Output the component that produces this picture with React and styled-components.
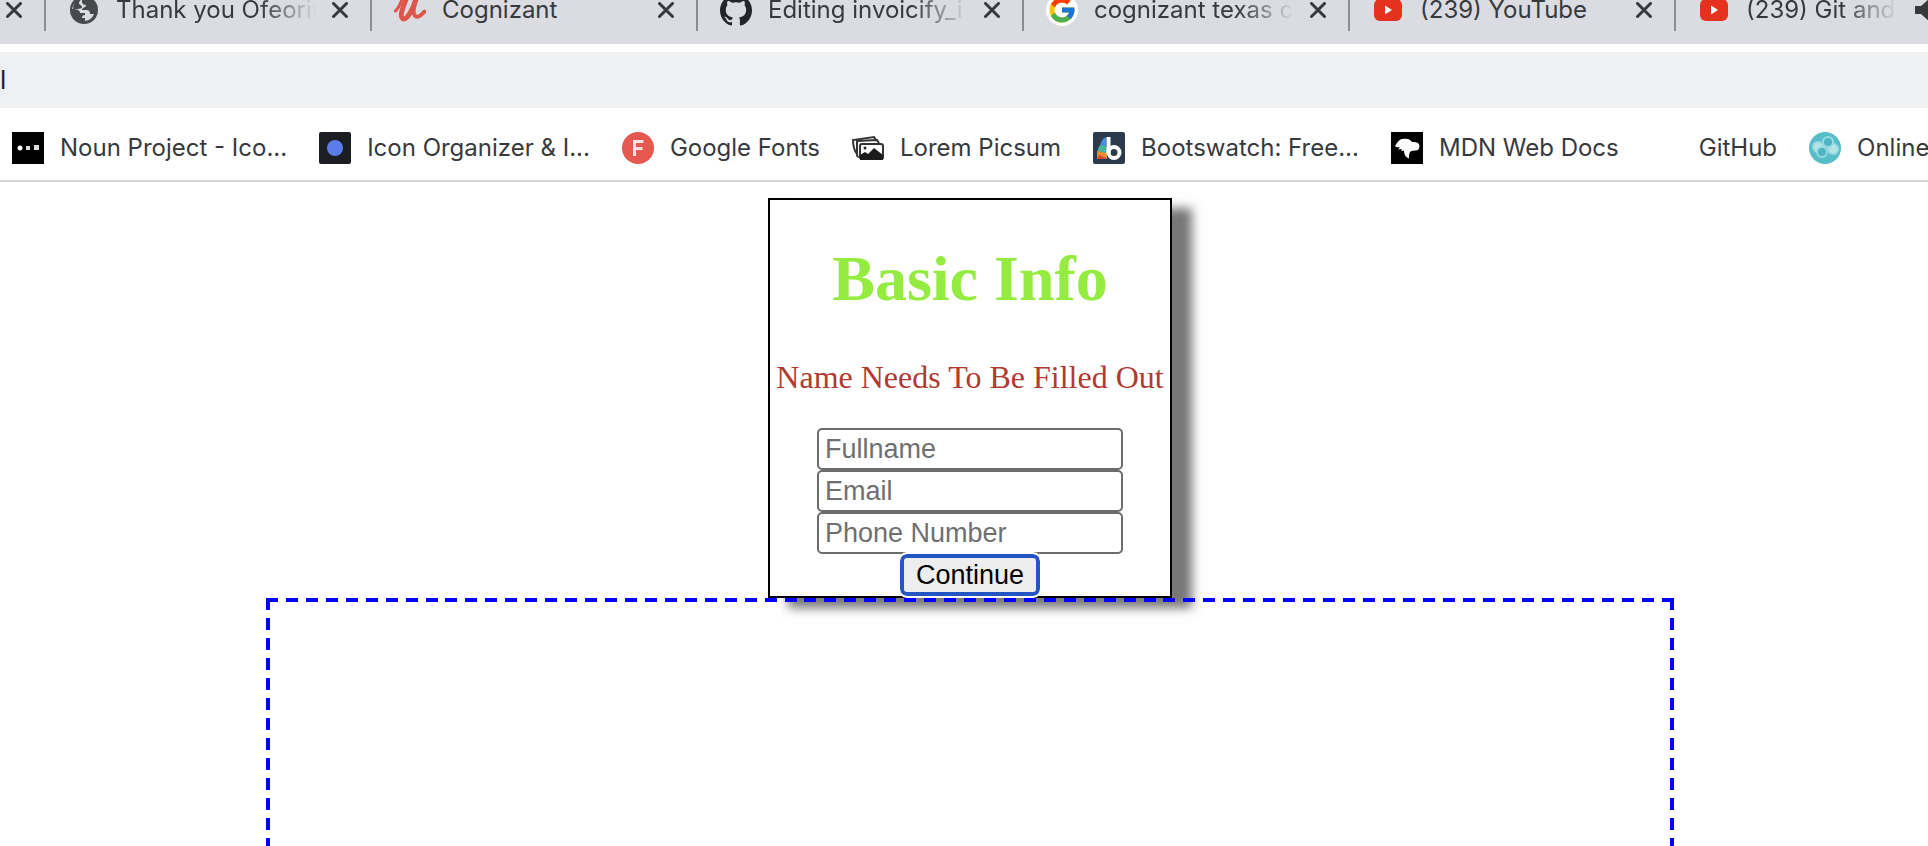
import React from 'react';
import styled, { createGlobalStyle } from 'styled-components';
import { SiGithub } from 'react-icons/si';
import { FcGoogle } from 'react-icons/fc';

const Global = createGlobalStyle`
  * { box-sizing: border-box; }
  html, body, #root { height: 100%; }
  body { margin: 0; background: #fff; overflow: hidden; }
`;

const Page = styled.div`
  min-height: 100%;
  display: flex;
  flex-direction: column;
`;

const TabStrip = styled.nav`
  display: flex;
  height: 44px;
  overflow: hidden;
  background: #dbdce1;
  font: 24px/32px Inter, sans-serif;
  color: #37393d;
`;

const Tab = styled.div`
  flex: 0 0 ${(p) => (p.$first ? '46px' : '326px')};
  min-width: 0;
  display: flex;
  align-items: center;
  gap: 16px;
  height: 31px;
  padding: 0 22px 11px ${(p) => (p.$first ? '6px' : '22px')};
  border-right: 2px solid #8c8d91;
`;

const TabLink = styled.a`
  flex: 1;
  min-width: 0;
  display: flex;
  align-items: center;
  gap: 16px;
  color: inherit;
  text-decoration: none;
  svg { flex: none; }
`;

const TabTitle = styled.span`
  flex: 1;
  min-width: 0;
  overflow: hidden;
  white-space: nowrap;
  mask-image: ${(p) => (p.$fade ? 'linear-gradient(to right, #000 calc(100% - 56px), transparent)' : 'none')};
`;

const IconButton = styled.button`
  display: flex;
  flex: none;
  padding: 0;
  border: 0;
  background: none;
  color: inherit;
`;

const AddressBar = styled.input`
  display: block;
  width: 100%;
  height: 56px;
  margin-top: 8px;
  padding: 0;
  border: 0;
  outline: 0;
  background: #eff0f2;
  color: #222;
  font: 26px/56px Inter, sans-serif;
`;

const BookmarkBar = styled.nav`
  display: flex;
  align-items: center;
  height: 74px;
  padding: 8px 0 0 12px;
  overflow: hidden;
  gap: 32px;
  border-bottom: 2px solid #d7d7dc;
  font: 24px/32px Inter, sans-serif;
  color: #37393d;
`;

const Bookmark = styled.a`
  display: flex;
  align-items: center;
  gap: 16px;
  flex: none;
  color: inherit;
  text-decoration: none;
  white-space: nowrap;
`;

const Content = styled.main`
  flex: 1;
  display: flex;
  flex-direction: column;
  align-items: center;
  padding: 16px 0 0 12px;
`;

const Card = styled.form`
  display: flex;
  flex-direction: column;
  align-items: center;
  padding: 0 6px;
  border: 2px solid #000;
  box-shadow: 20px 10px 10px #777;
  font-family: "Liberation Serif", serif;
`;

const Title = styled.h1`
  margin: 42px 0 43px;
  font-size: 64px;
  line-height: 74px;
  color: #94ec40;
`;

const Message = styled.p`
  margin: 0 0 33px;
  font-size: 32px;
  line-height: 36px;
  color: #b13a30;
`;

const Field = styled.input`
  width: 306px;
  height: 42px;
  padding: 2px 6px;
  border: 2px solid #6c6c6c;
  border-radius: 5px;
  background: #fff;
  font: 27px/32px "Liberation Sans", sans-serif;
  &::placeholder { color: #6f6f6f; opacity: 1; }
`;

const Continue = styled.button`
  height: 42px;
  padding: 0 12px;
  border: 4px solid #2355c4;
  border-radius: 7px;
  outline: 2px solid #fff;
  background: #ededed;
  color: #000;
  font: 27px/32px "Liberation Sans", sans-serif;
`;

/* Dashes are 12px long on a 20px period, longer than the browser's own dashed border. */
const Canvas = styled.section`
  --side: repeating-linear-gradient(to bottom, #00f 0 12px, transparent 12px 20px);
  flex: 1;
  align-self: stretch;
  margin: 0 254px;
  background:
    repeating-linear-gradient(to right, #00f 0 12px, transparent 12px calc((100% + 8px) / 71)) top / 100% 4px no-repeat,
    var(--side) left / 4px 100% no-repeat,
    var(--side) right / 4px 100% no-repeat;
`;

const Close = () => (
  <svg width="16" height="16" viewBox="0 0 16 16" stroke="currentColor" strokeWidth="3" strokeLinecap="round">
    <path d="M1.5 1.5 14.5 14.5M14.5 1.5 1.5 14.5" />
  </svg>
);

const Globe = () => (
  <svg width="32" height="32" viewBox="0 0 32 32">
    <circle cx="16" cy="16" r="14" fill="#48494d" />
    <path d="M14 5v3c0 2 2 3 4 3 0 3-4 2-4 5h5c2 0 3 2 3 4h4a11 11 0 0 1-9 7v-3h-3c0-2 1-3 3-3v-2h-5c0-3-3-4-8-4A11 11 0 0 1 14 5" fill="#dbdce1" />
    <path d="M15 4c-2 2-4 3-4 5s3 2 3 4-4 2-9 2C5 8 9 4 15 4" fill="#48494d" />
  </svg>
);

const Udemy = () => (
  <svg width="32" height="32" viewBox="0 0 32 32" fill="none" stroke="#de5549" strokeLinecap="round" strokeLinejoin="round">
    <path d="M1.500 17C5 14 7 8 9 3" strokeWidth="3" />
    <path d="M13 3C10 11 5 22 8.500 24.500 13 27 19 15 22 5" strokeWidth="5" />
    <path d="M23 3C20 12 18 21 22 22.500c3 1 6-2 8.500-5" strokeWidth="4" />
  </svg>
);

const GoogleBadge = () => (
  <svg width="32" height="32" viewBox="0 0 32 32">
    <circle cx="16" cy="16" r="16" fill="#fff" />
    <FcGoogle x="1" y="1" size={30} />
  </svg>
);

const YouTube = () => (
  <svg width="32" height="32" viewBox="0 0 32 32">
    <rect x="2" y="5" width="28" height="22" rx="6" fill="#e5321f" />
    <path d="m13 11.500 7 4.500-7 4.500z" fill="#fff" />
  </svg>
);

const Speaker = () => (
  <svg width="32" height="32" viewBox="0 0 32 32" fill="#37393d">
    <path d="M1 12h6l8-7v22l-8-7H1z" />
    <path d="M18 10q6 6 0 12" fill="none" stroke="#37393d" strokeWidth="3" />
  </svg>
);

const Noun = () => (
  <svg width="32" height="32" viewBox="0 0 32 32">
    <path d="M0 0h32v32H0z" />
    <circle cx="8" cy="16" r="2.500" fill="#fff" />
    <path d="M14 14h4v4h-4zM22 13h5v5h-5z" fill="#ddd" />
  </svg>
);

const Organizer = () => (
  <svg width="32" height="32" viewBox="0 0 32 32">
    <rect width="32" height="32" rx="2" fill="#1d1e22" />
    <circle cx="16" cy="16" r="8" fill="#5c7de8" />
  </svg>
);

const FontsIcon = () => (
  <svg width="32" height="32" viewBox="0 0 32 32">
    <circle cx="16" cy="16" r="16" fill="#e5574f" />
    <path d="M12.500 24V9.500H21.500M12.500 16.500H20.500" fill="none" stroke="#f8e4e3" strokeWidth="3" />
  </svg>
);

const Picsum = () => (
  <svg width="32" height="32" viewBox="0 0 32 32" fill="none" stroke="#333" strokeWidth="2">
    <path d="M5 22C2 18 1 13 1 8l21-3 2 3" />
    <path d="M8 25c-3 0-3-1-3-3V9l20-1 2 3" />
    <rect x="8" y="12" width="23" height="15" rx="2" fill="#fff" />
    <path d="M8 28v-5l5-3 3 2 6-6 9 7v5z" fill="#1c1c1c" stroke="none" />
    <circle cx="13" cy="16" r="1.500" fill="#222" stroke="none" />
  </svg>
);

const Bootswatch = () => (
  <svg width="32" height="32" viewBox="0 0 32 32">
    <rect width="32" height="32" rx="2" fill="#2b3a4c" />
    <path d="M13 5v10l-6 1c0-5 2-9 6-11" fill="#4a90d9" />
    <path d="m7 13 7 2v7H5c-1-3 0-6 2-9" fill="#49b39c" />
    <path d="m4 19 10 2v6H4z" fill="#e98c2c" />
    <path d="m6 23 9 4H4z" fill="#d64b35" />
    <path d="M15.500 5v17" stroke="#fff" strokeWidth="4" />
    <circle cx="21" cy="20.500" r="5.500" fill="none" stroke="#fff" strokeWidth="4" />
  </svg>
);

const Mdn = () => (
  <svg width="32" height="32" viewBox="0 0 32 32">
    <path d="M0 0h32v32H0z" />
    <path d="M4 14 6 11C8 7 12 6 16 7c3 0 4 2 5 3 3 0 5 0 7 2 1 2 0 5-1 6-3 1-6 0-8 2-1 2-1 4-1 6.500-3-1-5-4-5-8l-3 .5 1-2-4 .5 2-2-4-.5z" fill="#fff" />
  </svg>
);

const Online = () => (
  <svg width="32" height="32" viewBox="0 0 32 32">
    <circle cx="16" cy="16" r="16" fill="#56bdc9" />
    <g fill="#4eb5c3" stroke="#9adbe1" strokeWidth="2">
      <circle cx="9" cy="15" r="5" fill="#b5e4e8" />
      <circle cx="24" cy="17" r="5" fill="#b5e4e8" />
      <circle cx="19" cy="10" r="5" />
      <circle cx="13" cy="20" r="5" />
    </g>
  </svg>
);

const Blank = styled.span`
  width: 32px;
  height: 32px;
`;

const tabs = [
  { title: 'Thank you Ofeorit', icon: <Globe />, fade: true },
  { title: 'Cognizant', icon: <Udemy /> },
  { title: 'Editing invoicify_i', icon: <SiGithub size={32} color="#222529" />, fade: true },
  { title: 'cognizant texas c', icon: <GoogleBadge />, fade: true },
  { title: '(239) YouTube', icon: <YouTube /> },
  { title: '(239) Git and', icon: <YouTube />, fade: true, playing: true },
];

const bookmarks = [
  ['Noun Project - Ico...', <Noun />],
  ['Icon Organizer & I...', <Organizer />],
  ['Google Fonts', <FontsIcon />],
  ['Lorem Picsum', <Picsum />],
  ['Bootswatch: Free...', <Bootswatch />],
  ['MDN Web Docs', <Mdn />],
  ['GitHub', <Blank />],
  ['Online', <Online />],
];

export default function App() {
  return (
    <Page>
      <Global />
      <TabStrip>
        <Tab $first><IconButton aria-label="Close tab"><Close /></IconButton></Tab>
        {tabs.map((t) => (
          <Tab key={t.title}>
            <TabLink href="#">{t.icon}<TabTitle $fade={t.fade}>{t.title}</TabTitle></TabLink>
            {t.playing && <IconButton aria-label="Mute tab"><Speaker /></IconButton>}
            <IconButton aria-label="Close tab"><Close /></IconButton>
          </Tab>
        ))}
      </TabStrip>
      <AddressBar aria-label="Address" defaultValue="l" />
      <BookmarkBar>
        {bookmarks.map(([label, icon]) => (
          <Bookmark href="#" key={label}>{icon}<span>{label}</span></Bookmark>
        ))}
      </BookmarkBar>
      <Content>
        <Card>
          <Title>Basic Info</Title>
          <Message>Name Needs To Be Filled Out</Message>
          <Field aria-label="Fullname" placeholder="Fullname" />
          <Field aria-label="Email" placeholder="Email" />
          <Field aria-label="Phone Number" placeholder="Phone Number" />
          <Continue type="button">Continue</Continue>
        </Card>
        <Canvas />
      </Content>
    </Page>
  );
}
